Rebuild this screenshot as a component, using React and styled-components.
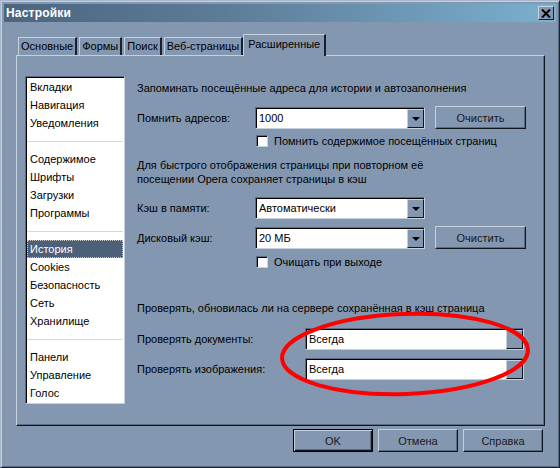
import React from "react";
import styled, { createGlobalStyle } from "styled-components";

const GlobalStyle = createGlobalStyle`
  html, body {
    margin: 0;
    padding: 0;
    background: #8497b0;
  }
  body {
    font-family: "Liberation Sans", Arial, sans-serif;
    font-size: 11px;
    color: #000;
  }
`;

const Window = styled.div`
  position: relative;
  box-sizing: border-box;
  width: 560px;
  height: 468px;
  background: #8497b0;
  border: 1px solid;
  border-color: #a9b8ca #1c2430 #1c2430 #a9b8ca;
  box-shadow: inset 1px 1px 0 #c4d0dc, inset -1px -1px 0 #5c6c80;
  padding: 2px 2px 0 2px;
  display: flex;
  flex-direction: column;
  overflow: hidden;
`;

const TitleBar = styled.div`
  height: 18px;
  margin: 1px 1px 0 1px;
  display: flex;
  align-items: center;
  justify-content: space-between;
  padding: 0 2px 0 2px;
  background: linear-gradient(90deg, #4b6580 0%, #5d7c98 40%, #7ab0cf 100%);
`;

const Title = styled.span`
  color: #fff;
  font-weight: bold;
  font-size: 12px;
  letter-spacing: 0.2px;
`;

const CloseButton = styled.div`
  box-sizing: border-box;
  width: 16px;
  height: 14px;
  background: #8497b0;
  border: 1px solid;
  border-color: #c8d4e0 #1a2028 #1a2028 #c8d4e0;
  display: flex;
  align-items: center;
  justify-content: center;
`;

const Body = styled.div`
  flex: 1;
  display: flex;
  flex-direction: column;
  padding: 12px 13px 0 13px;
`;

const TabStrip = styled.div`
  display: flex;
  align-items: flex-end;
  height: 21px;
  padding-left: 2px;
  gap: 2px;
`;

const Tab = styled.div`
  box-sizing: border-box;
  height: ${(p) => (p.$active ? "22px" : "18px")};
  margin: ${(p) => (p.$active ? "0 -2px -1px -2px" : "0")};
  padding: ${(p) => (p.$active ? "3px 4px 0 4px" : "2px 2px 0 2px")};
  border-top: 1px solid #c4d0dc;
  border-left: 1px solid #c4d0dc;
  border-right: 2px solid #1a2028;
  background: #8497b0;
  position: relative;
  z-index: ${(p) => (p.$active ? 2 : 1)};
  white-space: nowrap;
  line-height: 13px;
`;

const Panel = styled.div`
  box-sizing: border-box;
  width: 529px;
  height: 371px;
  border: 1px solid;
  border-color: #c4d0dc #10161e #10161e #c4d0dc;
  box-shadow: inset -1px -1px 0 #5c6c80;
  display: flex;
  padding: 20px 0 0 8px;
  gap: 12px;
`;

const ListBox = styled.div`
  box-sizing: border-box;
  width: 100px;
  height: 328px;
  background: #fff;
  border: 1px solid;
  border-color: #5c6c80 #c4d0dc #c4d0dc #5c6c80;
  box-shadow: inset 1px 1px 0 #000;
  padding: 1px 1px 0 1px;
  display: flex;
  flex-direction: column;
`;

const ListItem = styled.div`
  box-sizing: border-box;
  height: 18px;
  line-height: 16px;
  padding-left: 2px;
  border: 1px dotted ${(p) => (p.$selected ? "#c8c8c8" : "transparent")};
  background: ${(p) => (p.$selected ? "#4d6079" : "transparent")};
  color: ${(p) => (p.$selected ? "#fff" : "#000")};
  white-space: nowrap;
`;

const ListSeparator = styled.div`
  height: 18px;
  display: flex;
  align-items: center;
  &::after {
    content: "";
    flex: 1;
    height: 1px;
    background: #d8d8d8;
  }
`;

const Content = styled.div`
  flex: 1;
  display: flex;
  flex-direction: column;
  padding-top: 5px;
`;

const Text = styled.div`
  line-height: 14px;
  margin-top: ${(p) => p.$mt || 0}px;
  white-space: nowrap;
`;

const Row = styled.div`
  display: grid;
  grid-template-columns: ${(p) => p.$label}px ${(p) => p.$combo}px auto;
  column-gap: 10px;
  align-items: center;
  height: 23px;
  margin-top: ${(p) => p.$mt || 0}px;
`;

const Combo = styled.div`
  box-sizing: border-box;
  height: 22px;
  background: #fff;
  border: 1px solid;
  border-color: #5c6c80 #c4d0dc #c4d0dc #5c6c80;
  box-shadow: inset 1px 1px 0 #000;
  display: flex;
  align-items: stretch;
  padding: 1px 0 0 1px;
`;

const ComboValue = styled.span`
  flex: 1;
  line-height: 19px;
  padding-left: 2px;
`;

const ComboArrow = styled.div`
  box-sizing: border-box;
  width: 17px;
  background: #8497b0;
  border: 1px solid;
  border-color: #c4d0dc #10161e #10161e #c4d0dc;
  display: flex;
  align-items: center;
  justify-content: center;
  &::after {
    content: "";
    display: ${(p) => (p.$empty ? "none" : "block")};
    border-left: 4px solid transparent;
    border-right: 4px solid transparent;
    border-top: 4px solid #000;
    margin-top: 1px;
  }
`;

const Button = styled.div`
  box-sizing: border-box;
  width: ${(p) => p.$w || 80}px;
  height: 23px;
  display: flex;
  align-items: center;
  justify-content: center;
  background: #8497b0;
  border: 1px solid;
  border-color: ${(p) =>
    p.$default ? "#000" : "#c4d0dc #10161e #10161e #c4d0dc"};
  box-shadow: ${(p) =>
    p.$default
      ? "inset 1px 1px 0 #c4d0dc, inset -1px -1px 0 #10161e, inset -2px -2px 0 #5c6c80"
      : "inset -1px -1px 0 #5c6c80"};
  color: #1a1a1a;
`;

const CheckRow = styled.label`
  display: flex;
  align-items: center;
  gap: 6px;
  height: 16px;
  margin-top: ${(p) => p.$mt || 0}px;
  padding-left: 119px;
  white-space: nowrap;
`;

const CheckBox = styled.span`
  box-sizing: border-box;
  width: 12px;
  height: 12px;
  background: #fff;
  border: 1px solid;
  border-color: #5c6c80 #c4d0dc #c4d0dc #5c6c80;
  box-shadow: inset 1px 1px 0 #000;
`;

const Footer = styled.div`
  display: flex;
  justify-content: flex-end;
  gap: 5px;
  padding: 3px 1px 0 0;
`;

const Annotation = styled.svg`
  position: absolute;
  left: 0;
  top: 0;
  pointer-events: none;
`;

const tabs = ["Основные", "Формы", "Поиск", "Веб-страницы", "Расширенные"];

const sections = [
  ["Вкладки", "Навигация", "Уведомления"],
  ["Содержимое", "Шрифты", "Загрузки", "Программы"],
  ["История", "Cookies", "Безопасность", "Сеть", "Хранилище"],
  ["Панели", "Управление", "Голос"],
];

export default function App() {
  return (
    <>
      <GlobalStyle />
      <Window>
        <TitleBar>
          <Title>Настройки</Title>
          <CloseButton>
            <svg width="10" height="9" viewBox="0 0 10 9">
              <path d="M1 0.5 L9 8.5 M9 0.5 L1 8.5" stroke="#000" strokeWidth="2" />
            </svg>
          </CloseButton>
        </TitleBar>
        <Body>
          <TabStrip>
            {tabs.map((t, i) => (
              <Tab key={t} $active={i === tabs.length - 1}>
                {t}
              </Tab>
            ))}
          </TabStrip>
          <Panel>
            <ListBox>
              {sections.map((group, gi) => (
                <React.Fragment key={gi}>
                  {gi > 0 && <ListSeparator />}
                  {group.map((item) => (
                    <ListItem key={item} $selected={item === "История"}>
                      {item}
                    </ListItem>
                  ))}
                </React.Fragment>
              ))}
            </ListBox>
            <Content>
              <Text>Запоминать посещённые адреса для истории и автозаполнения</Text>
              <Row $label={108} $combo={170} $mt={11}>
                <span>Помнить адресов:</span>
                <Combo>
                  <ComboValue>1000</ComboValue>
                  <ComboArrow />
                </Combo>
                <Button $w={91}>Очистить</Button>
              </Row>
              <CheckRow $mt={4}>
                <CheckBox />
                Помнить содержимое посещённых страниц
              </CheckRow>
              <Text $mt={9}>
                Для быстрого отображения страницы при повторном её
                <br />
                посещении Opera сохраняет страницы в кэш
              </Text>
              <Row $label={108} $combo={170} $mt={10}>
                <span>Кэш в памяти:</span>
                <Combo>
                  <ComboValue>Автоматически</ComboValue>
                  <ComboArrow />
                </Combo>
              </Row>
              <Row $label={108} $combo={170} $mt={7}>
                <span>Дисковый кэш:</span>
                <Combo>
                  <ComboValue>20 МБ</ComboValue>
                  <ComboArrow />
                </Combo>
                <Button $w={91}>Очистить</Button>
              </Row>
              <CheckRow $mt={5}>
                <CheckBox />
                Очищать при выходе
              </CheckRow>
              <Text $mt={31}>Проверять, обновилась ли на сервере сохранённая в кэш страница</Text>
              <Row $label={158} $combo={219} $mt={12}>
                <span>Проверять документы:</span>
                <Combo>
                  <ComboValue>Всегда</ComboValue>
                  <ComboArrow $empty />
                </Combo>
              </Row>
              <Row $label={158} $combo={219} $mt={7}>
                <span>Проверять изображения:</span>
                <Combo>
                  <ComboValue>Всегда</ComboValue>
                  <ComboArrow $empty />
                </Combo>
              </Row>
            </Content>
          </Panel>
          <Footer>
            <Button $default>OK</Button>
            <Button>Отмена</Button>
            <Button>Справка</Button>
          </Footer>
        </Body>
        <Annotation width="560" height="468" viewBox="0 0 560 468">
          <ellipse
            cx="404"
            cy="353"
            rx="123"
            ry="40"
            transform="rotate(-2 404 353)"
            fill="none"
            stroke="#ff0000"
            strokeWidth="4"
          />
        </Annotation>
      </Window>
    </>
  );
}
